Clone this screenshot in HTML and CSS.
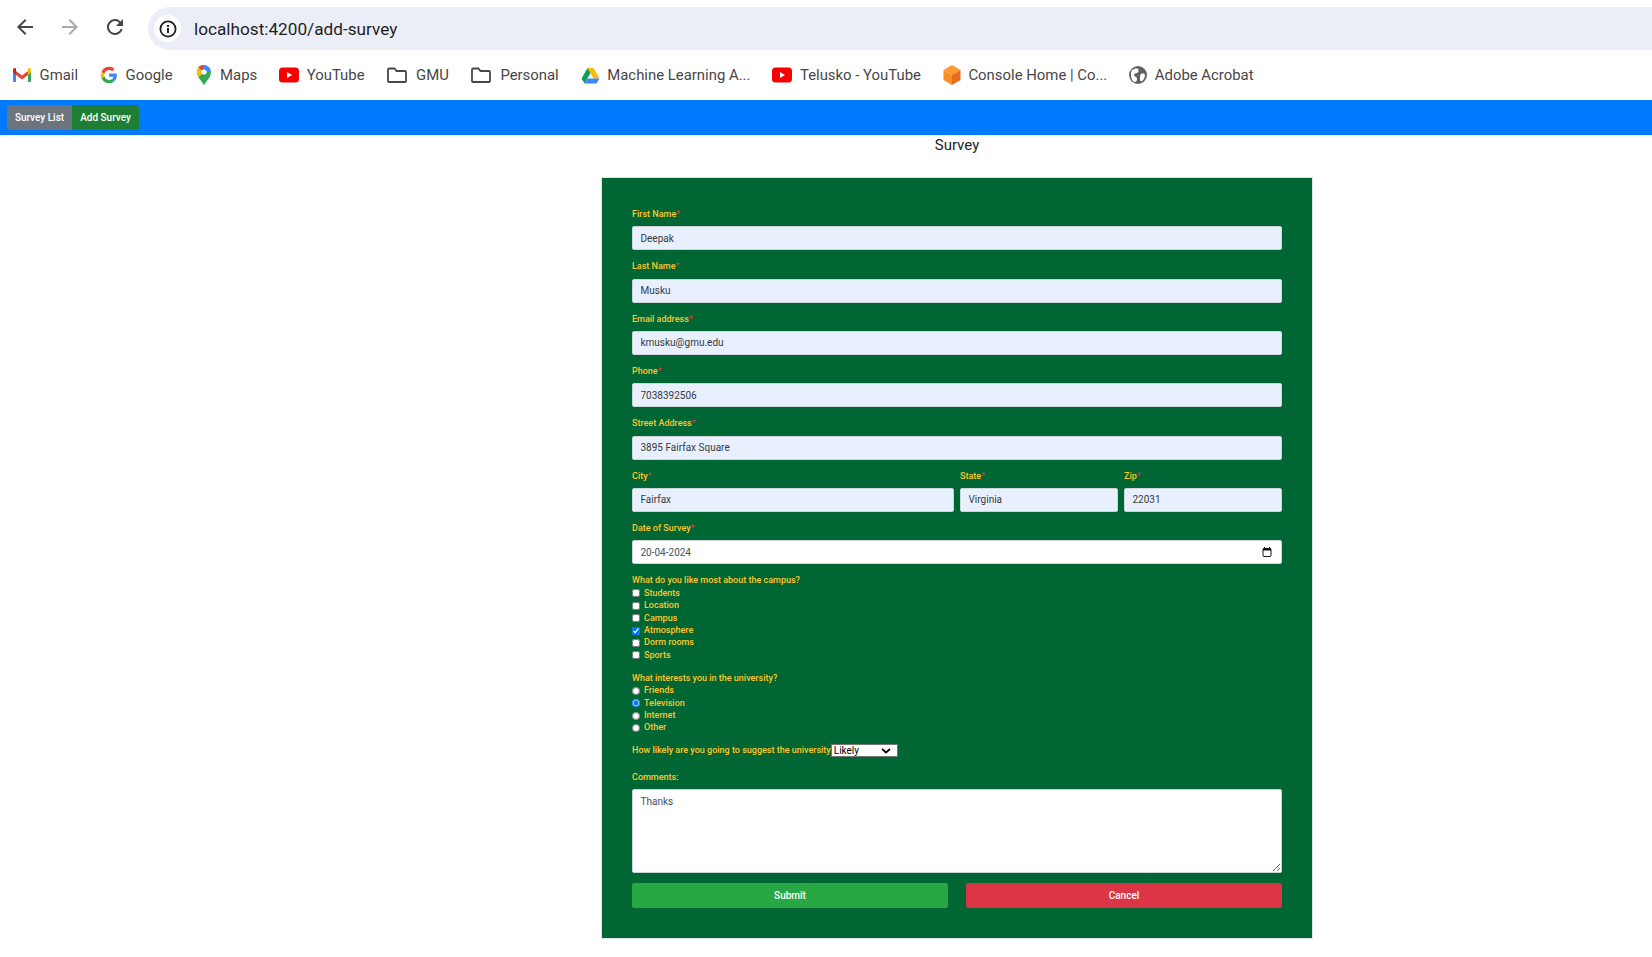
FILE: index.html
```html
<!DOCTYPE html>
<html lang="en">
<head>
    <meta charset="UTF-8">
    <meta name="viewport" content="width=device-width, initial-scale=1.0">
    <title>Add Survey</title>
    <link rel="stylesheet" href="styles.css">
</head>
<body>
    <div class="toolbar">
        <div class="nav-icons">
            <svg class="nav-icon" viewBox="0 0 24 24"><path d="M20 11H7.8l5.6-5.6L12 4l-8 8 8 8 1.4-1.4L7.8 13H20z" fill="#444746"/></svg>
            <svg class="nav-icon" viewBox="0 0 24 24"><path d="M4 11h12.2l-5.6-5.6L12 4l8 8-8 8-1.4-1.4 5.6-5.6H4z" fill="#a8aaad"/></svg>
            <svg class="nav-icon" viewBox="0 0 24 24"><path d="M17.6 6.4A8 8 0 1 0 19.7 14h-2.1a6 6 0 1 1-1.4-6.2L13 11h7V4z" fill="#444746"/></svg>
        </div>
        <div class="address-bar">
            <span class="site-info">
                <svg width="18" height="18" viewBox="0 0 18 18"><circle cx="9" cy="9" r="7.6" fill="none" stroke="#1f1f1f" stroke-width="1.8"/><rect x="8" y="8" width="2" height="5" fill="#1f1f1f"/><rect x="8" y="5" width="2" height="2" fill="#1f1f1f"/></svg>
            </span>
            <span class="url">localhost:4200/add-survey</span>
        </div>
    </div>

    <div class="bookmarks">
        <a class="bookmark">
            <svg width="20" height="16" viewBox="0 0 20 16"><path d="M1 15V3l3 2v10H2a1 1 0 0 1-1-1z" fill="#4285f4"/><path d="M16 15V5l3-2v11a1 1 0 0 1-1 1z" fill="#34a853"/><path d="M4 8V4l6 4.500L16 4v4l-6 4.500z" fill="#ea4335"/><path d="M1 5V3c0-1.600 1.800-2.400 3-1.500V8z" fill="#c5221f"/><path d="M16 8V1.500c1.200-.9 3-.1 3 1.500v2z" fill="#fbbc04"/></svg>
            Gmail
        </a>
        <a class="bookmark">
            <svg width="18" height="18" viewBox="0 0 48 48"><path d="M45 24.500c0-1.600-.1-3.100-.4-4.500H24v8.500h11.800c-.5 2.700-2 5-4.400 6.600l7 5.400c4.100-3.800 6.600-9.400 6.600-16z" fill="#4285f4"/><path d="M24 46c5.900 0 10.900-2 14.400-5.400l-7-5.400c-2 1.300-4.500 2.100-7.400 2.100-5.700 0-10.500-3.800-12.200-9h-7.300v5.600C8 41.100 15.400 46 24 46z" fill="#34a853"/><path d="M11.800 28.300c-.9-2.700-.9-5.600 0-8.300v-5.600H4.500a22 22 0 0 0 0 19.500z" fill="#fbbc04"/><path d="M24 10.700c3.200 0 6.100 1.100 8.400 3.300l6.300-6.300C34.900 4.200 29.900 2 24 2 15.400 2 8 6.900 4.500 14.400l7.300 5.600c1.700-5.200 6.500-9.300 12.200-9.300z" fill="#ea4335"/></svg>
            Google
        </a>
        <a class="bookmark">
            <svg width="18" height="22" viewBox="-1 0 18 22"><path d="M8 21.500c-1-3.500-7-7.500-7-13.500 0-1 .3-2 .7-3L8 8l6.800-1c.1.300.2.700.2 1 0 6-6 10-7 13.500z" fill="#34a853"/><path d="M1 8c0 2 .8 3.600 1.800 5.200L9 7 2.200 3.200C1.400 4.400 1 6.200 1 8z" fill="#fbbc04"/><path d="M2.200 3.200A7 7 0 0 1 8 1v4L6 6.500z" fill="#ea4335"/><path d="M8 1a7 7 0 0 1 7 7h-3L6 6z" fill="#4285f4"/><circle cx="8" cy="8" r="2.600" fill="#fff"/></svg>
            Maps
        </a>
        <a class="bookmark">
            <svg width="20" height="16" viewBox="0 0 20 16"><rect y="0.500" width="20" height="15" rx="3.500" fill="#f70000"/><path d="M8 5v6l5-3z" fill="#fff"/></svg>
            YouTube
        </a>
        <a class="bookmark">
            <svg class="folder" width="20" height="16" viewBox="0 0 20 16"><path d="M1 2.500a1 1 0 0 1 1-1h5.500L9.500 4H18a1 1 0 0 1 1 1v9a1 1 0 0 1-1 1H2a1 1 0 0 1-1-1z" fill="none" stroke="#474747" stroke-width="1.800"/></svg>
            GMU
        </a>
        <a class="bookmark">
            <svg class="folder" width="20" height="16" viewBox="0 0 20 16"><path d="M1 2.500a1 1 0 0 1 1-1h5.500L9.500 4H18a1 1 0 0 1 1 1v9a1 1 0 0 1-1 1H2a1 1 0 0 1-1-1z" fill="none" stroke="#474747" stroke-width="1.800"/></svg>
            Personal
        </a>
        <a class="bookmark">
            <svg width="19" height="17" viewBox="0 0 19 17"><path d="M6.500 1h6l6 10.500h-6z" fill="#fbbc04"/><path d="M6.500 1L.5 11.500l3 5 6-10.500z" fill="#0f9d58"/><path d="M3.500 16.500h12l3-5H6.500z" fill="#4285f4"/></svg>
            Machine Learning A...
        </a>
        <a class="bookmark">
            <svg width="20" height="16" viewBox="0 0 20 16"><rect y="0.500" width="20" height="15" rx="3.500" fill="#f70000"/><path d="M8 5v6l5-3z" fill="#fff"/></svg>
            Telusko - YouTube
        </a>
        <a class="bookmark">
            <svg width="18" height="20" viewBox="0 0 18 20"><path d="M9 0l8.500 5L9 10 .5 5z" fill="#ff9a2e"/><path d="M.5 5L9 10v10L.5 15z" fill="#f98c26"/><path d="M17.500 5L9 10v10l8.500-5z" fill="#ea6a1f"/></svg>
            Console Home | Co...
        </a>
        <a class="bookmark">
            <svg width="18" height="18" viewBox="0 0 18 18"><circle cx="9" cy="9" r="9" fill="#5f6368"/><path d="M3 4c2-1 5-2 6-1s1 3-1 4-3 0-3 2 3 1 3 4-2 3-3 3C2 14 1 7 3 4zM12 8c2-1 4 0 4 1s-1 5-3 6-2-1-2-3 0-3 1-4z" fill="#fff"/></svg>
            Adobe Acrobat
        </a>
    </div>

    <div class="app-nav">
        <a class="nav-btn list-btn">Survey List</a>
        <a class="nav-btn add-btn">Add Survey</a>
    </div>

    <main class="content">
        <h1 class="page-title">Survey</h1>

        <form class="survey-form">
            <div class="field">
                <label>First Name<span class="req">*</span></label>
                <input class="text-input filled" type="text" value="Deepak">
            </div>
            <div class="field">
                <label>Last Name<span class="req">*</span></label>
                <input class="text-input filled" type="text" value="Musku">
            </div>
            <div class="field">
                <label>Email address<span class="req">*</span></label>
                <input class="text-input filled" type="text" value="kmusku@gmu.edu">
            </div>
            <div class="field">
                <label>Phone<span class="req">*</span></label>
                <input class="text-input filled" type="text" value="7038392506">
            </div>
            <div class="field">
                <label>Street Address<span class="req">*</span></label>
                <input class="text-input filled" type="text" value="3895 Fairfax Square">
            </div>
            <div class="field-row">
                <div class="field">
                    <label>City<span class="req">*</span></label>
                    <input class="text-input filled" type="text" value="Fairfax">
                </div>
                <div class="field">
                    <label>State<span class="req">*</span></label>
                    <input class="text-input filled" type="text" value="Virginia">
                </div>
                <div class="field">
                    <label>Zip<span class="req">*</span></label>
                    <input class="text-input filled" type="text" value="22031">
                </div>
            </div>
            <div class="field">
                <label>Date of Survey<span class="req">*</span></label>
                <div class="date-input">
                    <input type="text" value="20-04-2024">
                    <svg width="10" height="10" viewBox="0 0 10 10"><path d="M2.500 0v2M7.500 0v2" stroke="#111" stroke-width="1"/><rect x="1" y="1.500" width="8" height="8" rx="1" fill="none" stroke="#111" stroke-width="1"/><rect x="1" y="1.500" width="8" height="2" fill="#111"/></svg>
                </div>
            </div>

            <div class="option-group">
                <label>What do you like most about the campus?</label>
                <label class="option"><input type="checkbox"> Students</label>
                <label class="option"><input type="checkbox"> Location</label>
                <label class="option"><input type="checkbox"> Campus</label>
                <label class="option"><input type="checkbox" checked> Atmosphere</label>
                <label class="option"><input type="checkbox"> Dorm rooms</label>
                <label class="option"><input type="checkbox"> Sports</label>
            </div>

            <div class="option-group">
                <label>What interests you in the university?</label>
                <label class="option"><input type="radio" name="interest"> Friends</label>
                <label class="option"><input type="radio" name="interest" checked> Television</label>
                <label class="option"><input type="radio" name="interest"> Internet</label>
                <label class="option"><input type="radio" name="interest"> Other</label>
            </div>

            <div class="likely-row">
                <label>How likely are you going to suggest the university</label>
                <div class="select-wrap">
                    <select class="likely-select">
                        <option>Likely</option>
                        <option>Very Likely</option>
                        <option>Unlikely</option>
                    </select>
                    <svg class="select-arrow" width="10" height="6" viewBox="0 0 10 6"><path d="M1 1l4 3.500L9 1" fill="none" stroke="#000" stroke-width="1.700"/></svg>
                </div>
            </div>

            <div class="comments">
                <label>Comments:</label>
                <textarea>Thanks</textarea>
            </div>

            <div class="form-actions">
                <button type="submit" class="btn-submit">Submit</button>
                <button type="button" class="btn-cancel">Cancel</button>
            </div>
        </form>
    </main>
</body>
</html>
```

FILE: styles.css
```css
* {
    margin: 0;
    padding: 0;
    box-sizing: border-box;
}

html, body {
    height: 957px;
    overflow: hidden;
}

body {
    font-family: Roboto, "Liberation Sans", sans-serif;
    background-color: white;
}

.toolbar {
    height: 50px;
    display: flex;
    align-items: flex-start;
    background-color: white;
}

.nav-icons {
    display: flex;
    gap: 21px;
    width: 148px;
    padding: 15px 0 0 13px;
}

.nav-icon {
    width: 24px;
    height: 24px;
}

.address-bar {
    flex: 1;
    height: 43px;
    margin-top: 7px;
    display: flex;
    align-items: center;
    gap: 13px;
    padding-left: 6px;
    background-color: #ebeef7;
    border-radius: 22px 0 0 22px;
}

.site-info {
    width: 27px;
    height: 27px;
    display: flex;
    align-items: center;
    justify-content: center;
    background-color: white;
    border-radius: 50%;
}

.url {
    font-size: 17.2px;
    color: #1f1f1f;
}

.bookmarks {
    height: 50px;
    display: flex;
    align-items: center;
    gap: 22px;
    padding-left: 12px;
}

.bookmark {
    display: flex;
    align-items: center;
    gap: 7.5px;
    font-size: 14.9px;
    color: #474747;
    white-space: nowrap;
}

.folder {
    margin-right: 2px;
}

.app-nav {
    height: 35px;
    display: flex;
    align-items: center;
    padding-left: 7px;
    background-color: #007bff;
}

.nav-btn {
    height: 25px;
    display: flex;
    align-items: center;
    justify-content: center;
    font-size: 10px;
    font-weight: 500;
    color: white;
    border-radius: 2px;
    white-space: nowrap;
}

.list-btn {
    width: 65px;
    background-color: #6c757d;
}

.add-btn {
    width: 67px;
    background-color: #1e7e34;
}

.content {
    padding-left: 262px;
}

.page-title {
    height: 42px;
    text-align: center;
    font-size: 15px;
    font-weight: 400;
    line-height: 20px;
    color: #212529;
}

.survey-form {
    width: 712px;
    height: 762px;
    margin: 0 auto;
    padding: 30px 30px 0;
    background-color: #006633;
    border: 1px solid #dee2e6;
}

label {
    font-size: 9px;
    font-weight: 500;
    line-height: 13px;
    color: #ffc72c;
}

.req {
    color: #dc3545;
}

.field {
    margin-bottom: 10.03px;
}

.field > label {
    display: block;
    margin-bottom: 5.3px;
}

.field-row {
    display: grid;
    grid-template-columns: 322px 1fr 1fr;
    gap: 6px;
}

.text-input,
.date-input {
    display: block;
    width: 100%;
    height: 24px;
    padding: 0 7.5px;
    font-family: inherit;
    font-size: 10px;
    color: #495057;
    border: 1px solid #ced4da;
    border-radius: 2px;
    outline: none;
}

.filled {
    background-color: #e8f0fe;
    color: #343a40;
}

.date-input {
    display: flex;
    align-items: center;
    justify-content: space-between;
    background-color: white;
    padding-right: 9px;
}

.date-input input {
    flex: 1;
    font-family: inherit;
    font-size: 10px;
    color: #495057;
    border: none;
    outline: none;
}

.option-group {
    display: flex;
    flex-direction: column;
    margin-top: 7.3px;
    margin-bottom: 10px;
}

.option {
    display: flex;
    align-items: center;
    gap: 4px;
    height: 12.4px;
}

.option input {
    width: 8px;
    height: 8px;
    margin: 0;
}

.likely-row {
    display: flex;
    align-items: center;
    height: 13px;
    margin-top: 9.8px;
}

.select-wrap {
    position: relative;
    width: 67px;
    height: 13px;
}

.select-arrow {
    position: absolute;
    top: 3.5px;
    right: 7px;
    pointer-events: none;
}

.likely-select {
    display: block;
    width: 100%;
    height: 100%;
    appearance: none;
    font-family: inherit;
    font-size: 10px;
    padding: 0 2px;
    border: 1px solid #767676;
    background-color: white;
    color: black;
    border-radius: 0;
}

.comments {
    margin-top: 14px;
}

.comments label {
    display: block;
    margin-bottom: 5px;
}

.comments textarea {
    display: block;
    width: 100%;
    height: 84px;
    padding: 6px 7.5px;
    font-family: inherit;
    font-size: 10px;
    color: #495057;
    border: 1px solid #ced4da;
    border-radius: 2px;
    outline: none;
}

.form-actions {
    display: grid;
    grid-template-columns: 1fr 1fr;
    gap: 18px;
    margin-top: 10px;
}

.form-actions button {
    height: 25px;
    font-family: inherit;
    font-size: 10px;
    font-weight: 500;
    color: white;
    border: none;
    border-radius: 2px;
}

.btn-submit {
    background-color: #28a745;
}

.btn-cancel {
    background-color: #dc3545;
}
```
